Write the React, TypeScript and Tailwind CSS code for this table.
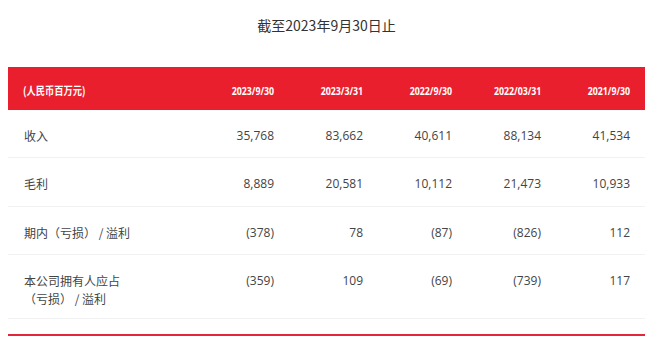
const cols = ["2023/9/30", "2023/3/31", "2022/9/30", "2022/03/31", "2021/9/30"];

const rows: { label: string[]; values: string[]; h: string }[] = [
  { label: ["收入"], values: ["35,768", "83,662", "40,611", "88,134", "41,534"], h: "h-[48px]" },
  { label: ["毛利"], values: ["8,889", "20,581", "10,112", "21,473", "10,933"], h: "h-[49px]" },
  { label: ["期内（亏损） / 溢利"], values: ["(378)", "78", "(87)", "(826)", "112"], h: "h-[48px]" },
  {
    label: ["本公司拥有人应占", "（亏损） / 溢利"],
    values: ["(359)", "109", "(69)", "(739)", "117"],
    h: "h-[64px]",
  },
];

export default function App() {
  return (
    <div className="h-[343px] w-[660px] overflow-hidden bg-white font-['Open_Sans','Noto_Sans_CJK_SC',sans-serif]">
      <div className="mx-[8px] w-[637px]">
        {/* Title */}
        <h2 className="pt-[14px] text-center text-[14px] leading-[22px] text-[#333] font-['Noto_Sans_CJK_SC',sans-serif]">
          截至2023年9月30日止
        </h2>

        <div className="mt-[31px]">
          {/* Header */}
          <div className="flex h-[43px] items-center bg-[#e91f2d] pl-[15px] pr-[15px] font-bold text-white">
            <div className="flex-1">
              <span className="inline-block origin-left scale-x-[0.84] text-[11px] font-['Noto_Sans_CJK_SC',sans-serif]">
                (人民币百万元)
              </span>
            </div>
            {cols.map((c) => (
              <div key={c} className="w-[89px] text-right">
                <span className="inline-block origin-right scale-x-[0.8] text-[11px] font-['Open_Sans',sans-serif]">
                  {c}
                </span>
              </div>
            ))}
          </div>

          {/* Body */}
          {rows.map((r, i) => (
            <div
              key={i}
              className={`flex items-start border-b border-[#f1f1f1] pl-[16px] pr-[15px] pt-[17px] text-[12px] leading-[18px] text-[#444] ${r.h}`}
            >
              <div className="flex-1 font-['Noto_Sans_CJK_SC',sans-serif]">
                {r.label.map((l) => (
                  <div key={l}>{l}</div>
                ))}
              </div>
              {r.values.map((v, j) => (
                <div key={j} className="w-[89px] text-right font-['Open_Sans',sans-serif]">
                  {v}
                </div>
              ))}
            </div>
          ))}

          <div className="mt-[15px] h-[2px] bg-[#e2263c]" />
        </div>
      </div>
    </div>
  );
}
